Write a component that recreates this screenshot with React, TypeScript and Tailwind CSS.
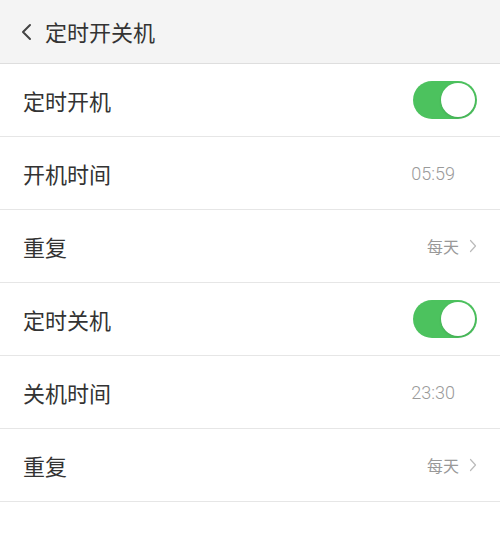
import { useState } from "react";

type Row =
  | { kind: "switch"; label: string; key: "on" | "off" }
  | { kind: "value"; label: string; value: string; arrow?: boolean };

const rows: Row[] = [
  { kind: "switch", label: "定时开机", key: "on" },
  { kind: "value", label: "开机时间", value: "05:59" },
  { kind: "value", label: "重复", value: "每天", arrow: true },
  { kind: "switch", label: "定时关机", key: "off" },
  { kind: "value", label: "关机时间", value: "23:30" },
  { kind: "value", label: "重复", value: "每天", arrow: true },
];

function Toggle({ checked, onChange }: { checked: boolean; onChange: () => void }) {
  return (
    <button
      type="button"
      onClick={onChange}
      className={`flex h-[38px] w-[64px] items-center rounded-full px-[2px] transition ${
        checked ? "justify-end bg-[#4cc25e]" : "justify-start bg-[#e5e5e5]"
      }`}
    >
      <span className="h-[34px] w-[34px] rounded-full bg-white shadow-sm" />
    </button>
  );
}

export default function App() {
  const [toggles, setToggles] = useState({ on: true, off: true });

  return (
    <div className="h-[543px] w-[500px] overflow-hidden bg-white font-['Noto_Sans_CJK_SC',sans-serif]">
      {/* Header */}
      <div className="flex h-[64px] items-center gap-[11px] border-b border-[#dedede] bg-[#f4f4f4] pl-[20px]">
        <svg width="14" height="20" viewBox="0 0 14 20" fill="none">
          <path d="M10 3 L3 10 L10 17" stroke="#444" strokeWidth="2" strokeLinecap="round" strokeLinejoin="round" />
        </svg>
        <span className="text-[22px] text-[#333]">定时开关机</span>
      </div>

      {/* List */}
      <div>
        {rows.map((row, i) => (
          <div
            key={i}
            className="flex h-[73px] items-center justify-between border-b border-[#e6e6e6] pl-[23px] pr-[23px]"
          >
            <span className="text-[22px] text-[#333]">{row.label}</span>
            {row.kind === "switch" ? (
              <Toggle
                checked={toggles[row.key]}
                onChange={() => setToggles((t) => ({ ...t, [row.key]: !t[row.key] }))}
              />
            ) : row.arrow ? (
              <span className="flex items-center gap-[10px] text-[16px] text-[#999]">
                {row.value}
                <svg width="8" height="14" viewBox="0 0 8 14" fill="none">
                  <path d="M1.5 1.5 L6.5 7 L1.5 12.5" stroke="#bbb" strokeWidth="1.2" strokeLinecap="round" strokeLinejoin="round" />
                </svg>
              </span>
            ) : (
              <span className="pr-[22px] font-['Roboto',sans-serif] text-[18px] font-light text-[#9a9a9a]">
                {row.value}
              </span>
            )}
          </div>
        ))}
      </div>
    </div>
  );
}
